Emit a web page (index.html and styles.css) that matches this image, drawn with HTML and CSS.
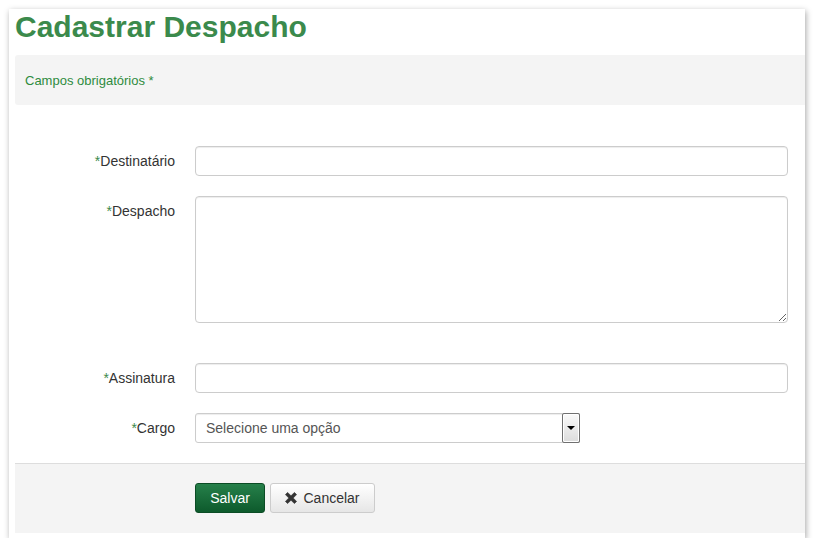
FILE: index.html
```html
<!DOCTYPE html>
<html lang="pt">
<head>
<meta charset="utf-8">
<title>Cadastrar Despacho</title>
<link rel="stylesheet" href="styles.css">
</head>
<body>
<div class="panel">
  <h1 class="title">Cadastrar Despacho</h1>
  <div class="notice">Campos obrigatórios *</div>
  <form class="form">
    <div class="fields">
      <label class="label"><span class="req">*</span>Destinatário</label>
      <input class="control" type="text">
      <label class="label"><span class="req">*</span>Despacho</label>
      <textarea class="control area"></textarea>
      <label class="label"><span class="req">*</span>Assinatura</label>
      <input class="control" type="text">
      <label class="label"><span class="req">*</span>Cargo</label>
      <div class="select">
        <span class="select-text">Selecione uma opção</span>
        <span class="select-btn"><span class="tri"></span></span>
      </div>
    </div>
    <div class="actions">
      <button type="button" class="btn btn-save">Salvar</button>
      <button type="button" class="btn btn-cancel"><svg class="x-icon" viewBox="0 0 12 12" width="12" height="12"><path d="M2.6 0.4 L6 3.8 L9.4 0.4 L11.6 2.6 L8.2 6 L11.6 9.4 L9.4 11.6 L6 8.2 L2.6 11.6 L0.4 9.4 L3.8 6 L0.4 2.6 Z" fill="#333" stroke="#333" stroke-width="0.6" stroke-linejoin="round"/></svg>Cancelar</button>
    </div>
  </form>
</div>
</body>
</html>
```
FILE: styles.css
```css
* { box-sizing: border-box; }
body {
  margin: 0;
  background: #fff;
  font-family: "Liberation Sans", Arial, sans-serif;
  color: #333;
}
.panel {
  margin: 9px 0 0 9px;
  width: 796px;
  padding: 0 0 5px 6px;
  background: #fff;
  box-shadow: 1px 2px 6px rgba(0,0,0,0.35);
}
.title {
  margin: 0 0 11px;
  padding: 1px 0 0 0;
  font-size: 30px;
  line-height: 34px;
  font-weight: bold;
  color: #3b8a4c;
}
.notice {
  height: 50px;
  line-height: 51px;
  padding: 0 10px;
  background: #f4f4f4;
  border-radius: 3px 0 0 3px;
  font-size: 13px;
  color: #2e8b3e;
}
.form { margin: 0; }
.fields {
  display: grid;
  grid-template-columns: 160px 592px;
  column-gap: 20px;
  row-gap: 20px;
  padding: 41px 0 20px;
}
.label {
  text-align: right;
  font-size: 14px;
  padding-top: 7px;
  color: #333;
}
.req { color: #3b8a4c; }
.control {
  display: block;
  width: 593px;
  height: 30px;
  border: 1px solid #ccc;
  border-radius: 4px;
  box-shadow: inset 0 1px 1px rgba(0,0,0,0.075);
  font-family: inherit;
  font-size: 14px;
  padding: 4px 10px;
  margin: 0;
  background: #fff;
}
.area {
  height: 127px;
  resize: vertical;
  margin-bottom: 20px;
}
.select {
  width: 385px;
  height: 30px;
  border: 1px solid #ccc;
  border-radius: 3px 0 0 3px;
  display: flex;
  align-items: center;
  justify-content: space-between;
  background: #fff;
  box-shadow: inset 0 1px 1px rgba(0,0,0,0.075);
}
.select-text {
  padding-left: 10px;
  font-size: 14px;
  color: #555;
}
.select-btn {
  width: 18px;
  height: 30px;
  margin-right: -1px;
  border: 1px solid #707070;
  border-radius: 2px;
  background: linear-gradient(#fafafa, #dcdcdc);
  box-shadow: inset 0 0 0 1px #fff;
  display: flex;
  align-items: center;
  justify-content: center;
}
.tri {
  width: 0;
  height: 0;
  border-left: 4px solid transparent;
  border-right: 4px solid transparent;
  border-top: 4px solid #000;
}
.actions {
  height: 70px;
  background: #f4f4f4;
  border-top: 1px solid #ddd;
  padding: 19px 0 0 180px;
  display: flex;
  gap: 5px;
  align-items: flex-start;
}
.btn {
  height: 30px;
  border-radius: 3px;
  font-family: inherit;
  font-size: 14px;
  padding: 0 12px;
  margin: 0;
  cursor: pointer;
  display: inline-flex;
  align-items: center;
}
.btn-save {
  width: 70px;
  justify-content: center;
  color: #fff;
  background: linear-gradient(#26804a, #0d5a2c);
  border: 1px solid #0b4c25;
}
.btn-cancel {
  width: 105px;
  justify-content: center;
  color: #333;
  background: linear-gradient(#fff, #e6e6e6);
  border: 1px solid #ccc;
}
.x-icon { margin-right: 6px; }
```
